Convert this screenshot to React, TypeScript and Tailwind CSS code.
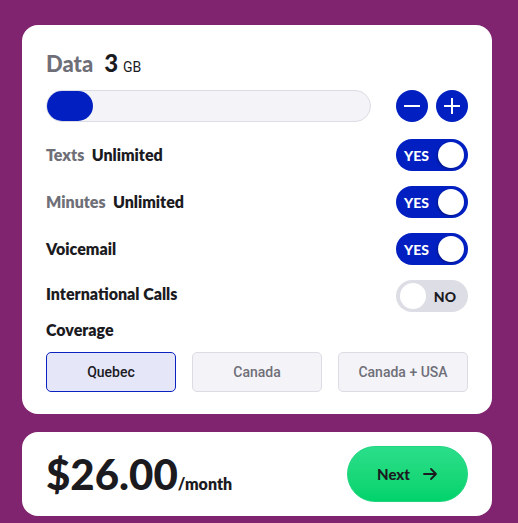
import { useState } from 'react';

const head = { fontFamily: '"Lato", "Inter", sans-serif' };
const body = { fontFamily: 'Roboto, "Liberation Sans", sans-serif' };

const Toggle = ({ on }: { on: boolean }) => {
    if (on) {
        return (
            <div className="flex h-8 w-[72px] shrink-0 items-center justify-between rounded-full bg-[#0220c1] pl-2 pr-[4px]">
                <span className="text-[14px] font-black text-white" style={head}>YES</span>
                <span className="h-[26px] w-[26px] rounded-full bg-white shadow-[-1px_1px_2px_rgba(0,0,40,0.35)]" />
            </div>
        );
    }
    return (
        <div className="flex h-8 w-[72px] shrink-0 items-center justify-between rounded-full bg-[#dddde6] pl-[4px] pr-3">
            <span className="h-[26px] w-[26px] rounded-full bg-white" />
            <span className="text-[14px] font-black text-[#1b1b1f]" style={head}>NO</span>
        </div>
    );
};

const RoundBtn = ({ plus }: { plus?: boolean }) => (
    <button className="relative flex h-8 w-8 items-center justify-center rounded-full bg-[#0220c1]">
        <span className="absolute h-[2px] w-[16px] bg-white" />
        {plus && <span className="absolute h-[16px] w-[2px] bg-white" />}
    </button>
);

const App = () => {
    const [coverage, setCoverage] = useState('Quebec');
    const options = ['Quebec', 'Canada', 'Canada + USA'];

    return (
        <div className="min-h-[523px] w-full bg-[#80246f] pl-[22px] pr-[26px] pt-[25px] pb-2" style={head}>
            <div className="rounded-[16px] bg-white px-6 pt-6 pb-[22px]">
                <div className="flex h-7 items-baseline">
                    <span className="text-[22px] font-black leading-7 text-[#6f6f78]">Data</span>
                    <span className="ml-[11px] text-[24px] font-black leading-7 text-[#1b1b1f]">3</span>
                    <span className="ml-[5px] text-[14px] leading-7 text-[#1b1b1f]" style={body}>GB</span>
                </div>

                <div className="mt-[13px] flex items-center">
                    <div className="h-8 w-[325px] rounded-full border border-[#dcdce4] bg-[#f4f4f8]">
                        <div className="h-[30px] w-[46px] rounded-full bg-[#0220c1]" />
                    </div>
                    <div className="ml-auto flex gap-2">
                        <RoundBtn />
                        <RoundBtn plus />
                    </div>
                </div>

                <div className="mt-[17px] flex flex-col gap-[15px] text-[16px] font-extrabold text-[#1b1b1f]">
                    <div className="flex items-center justify-between">
                        <span><span className="text-[#6f6f78]">Texts</span>&nbsp; Unlimited</span>
                        <Toggle on />
                    </div>
                    <div className="flex items-center justify-between">
                        <span><span className="text-[#6f6f78]">Minutes</span>&nbsp; Unlimited</span>
                        <Toggle on />
                    </div>
                    <div className="flex items-center justify-between">
                        <span>Voicemail</span>
                        <Toggle on />
                    </div>
                    <div className="flex items-start justify-between">
                        <span className="mt-[2px]">International Calls</span>
                        <Toggle on={false} />
                    </div>
                </div>

                <div className="mt-[6px] text-[16px] font-extrabold text-[#1b1b1f]">Coverage</div>

                <div className="mt-[10px] grid grid-cols-3 gap-4">
                    {options.map((opt) => (
                        <button
                            key={opt}
                            onClick={() => setCoverage(opt)}
                            className={
                                coverage === opt
                                    ? 'h-10 rounded-[5px] border border-[#0a22c0] bg-[#e5e6f8] text-[14px] font-medium text-[#1b1b1f]'
                                    : 'h-10 rounded-[5px] border border-[#dcdce4] bg-[#f4f4f8] text-[14px] font-medium text-[#6f6f78]'
                            }
                            style={body}
                        >
                            {opt}
                        </button>
                    ))}
                </div>
            </div>

            <div className="mt-[18px] flex items-center justify-between rounded-[16px] bg-white px-6 py-[14px]">
                <div className="flex items-baseline text-[#1b1b1f]">
                    <span className="text-[42px] font-black leading-[48px]">$26.00</span>
                    <span className="text-[16px] font-extrabold">/month</span>
                </div>
                <button className="flex h-[56px] w-[121px] items-center justify-center gap-3 rounded-full border border-[#1fd47f] bg-gradient-to-b from-[#2ade8a] to-[#00d36b] text-[15px] font-black text-[#1b1b1f]">
                    Next
                    <svg width="16" height="16" viewBox="0 0 16 16" fill="none" stroke="#1b1b1f" strokeWidth="1.8" strokeLinecap="round" strokeLinejoin="round">
                        <path d="M2 8h12M9 3l5 5-5 5" />
                    </svg>
                </button>
            </div>
        </div>
    );
};

export default App;
